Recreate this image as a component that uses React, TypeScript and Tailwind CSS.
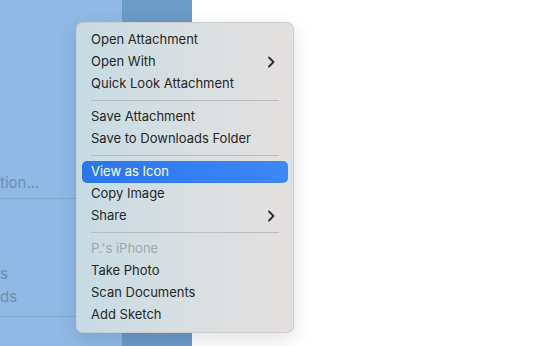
import React from "react";

type Item = { label: string; submenu?: boolean; active?: boolean; disabled?: boolean };

const groups: Item[][] = [
  [{ label: "Open Attachment" }, { label: "Open With", submenu: true }, { label: "Quick Look Attachment" }],
  [{ label: "Save Attachment" }, { label: "Save to Downloads Folder" }],
  [{ label: "View as Icon", active: true }, { label: "Copy Image" }, { label: "Share", submenu: true }],
  [{ label: "P.'s iPhone", disabled: true }, { label: "Take Photo" }, { label: "Scan Documents" }, { label: "Add Sketch" }],
];

const Chevron = ({ className }: { className?: string }) => (
  <svg width="8" height="12" viewBox="0 0 8 12" className={className}>
    <path d="M2 1.5 L6.5 6 L2 10.5" fill="none" stroke="currentColor" strokeWidth="1.8" strokeLinecap="round" strokeLinejoin="round" />
  </svg>
);

const MenuRow = ({ item }: { item: Item }) => (
  <div
    className={`flex items-center justify-between h-[22px] mx-[5px] pl-[9px] pr-[13px] rounded-[5px] ${
      item.active ? "bg-gradient-to-r from-[#2a76ee] to-[#3d87f6] text-white" : item.disabled ? "text-[#9ea7ad]" : "text-[#252627]"
    }`}
  >
    <span>{item.label}</span>
    {item.submenu && <Chevron className="text-[#2a2a2a]" />}
  </div>
);

export default function App() {
  return (
    <div
      className="relative w-[543px] h-[346px] overflow-hidden bg-white"
      style={{ fontFamily: "Inter, 'Liberation Sans', sans-serif" }}
    >
      {/* mail window behind the menu */}
      <div className="flex h-full w-[192px]">
        <div className="w-[122px] h-full bg-[#8fb9e4] flex flex-col text-[15px] text-[#6f8eaf]">
          <div className="h-[171px]" />
          <div className="h-[24px] leading-[24px]">tion...</div>
          <div className="border-b border-[#7fa7cf] mt-[3px]" />
          <div className="h-[63px]" />
          <div className="h-[23px] leading-[23px]">s</div>
          <div className="h-[23px] leading-[23px]">ds</div>
          <div className="border-b border-[#7fa7cf] mt-[8px]" />
        </div>
        <div className="flex-1 h-full bg-[#6b9bc8]" />
      </div>

      {/* context menu */}
      <div className="absolute left-[76px] top-[22px] w-[218px] rounded-[7px] border border-[#c4c6c8]/70 bg-gradient-to-r from-[#c6dbe4] via-[#d8dfe1] to-[#e5dfdf] shadow-[0_6px_20px_rgba(0,0,0,0.12)] py-[6px] text-[13px]">
        {groups.map((g, i) => (
          <div key={i}>
            {i > 0 && <div className="mx-[14px] my-[5px] border-t border-[#b9bdc0]" />}
            {g.map((item) => (
              <MenuRow key={item.label} item={item} />
            ))}
          </div>
        ))}
      </div>
    </div>
  );
}
